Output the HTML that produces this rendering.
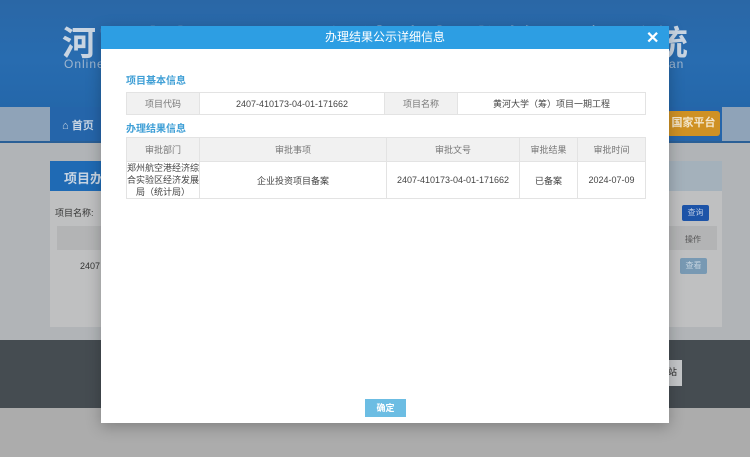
<!DOCTYPE html>
<html><head><meta charset="utf-8"><style>
*{margin:0;padding:0;box-sizing:border-box}
body{width:750px;height:457px;overflow:hidden;position:relative;font-family:"Liberation Sans","Noto Sans CJK SC",sans-serif;background:#a9abad}
.abs{position:absolute}
.hdr{left:0;top:0;width:750px;height:107px;background:linear-gradient(180deg,#2a67a6 0%,#286cb0 55%,#2467aa 100%)}
.title{left:62px;top:16px;font-size:34px;font-weight:bold;color:#c9d5e2;letter-spacing:3px;white-space:nowrap}
.sub{left:64px;top:57px;font-size:12px;color:#9fb6cf;letter-spacing:1px}
.nav{left:0;top:107px;width:750px;height:34px;background:#8fa3b8}
.navin{left:50px;top:107px;width:672px;height:34px;background:#2565aa}
.navbot{left:0;top:141px;width:750px;height:2px;background:#2a5f96}
.content{left:0;top:143px;width:750px;height:197px;background:#b1b4b7}
.panel{left:50px;top:161px;width:672px;height:166px;background:#bfc0c1}
.ph{left:50px;top:161px;width:672px;height:30px;background:#a4b1bb}
.phl{left:50px;top:161px;width:80px;height:30px;background:#1f6ab4;color:#c7d4e2;font-size:13px;font-weight:bold;padding:7px 14px;white-space:nowrap;overflow:hidden}
.dark{left:0;top:340px;width:750px;height:68px;background:#454c51}
.bot{left:0;top:408px;width:750px;height:49px;background:#acacac}
.modal{left:101px;top:26px;width:568px;height:397px;background:#fff;box-shadow:0 4px 14px rgba(0,0,0,.25)}
.mh{left:101px;top:26px;width:568px;height:23px;background:#2d9ee3;color:#fff;font-size:12px;text-align:center;line-height:23px}
.x{left:646px;top:28px;color:#fff;font-size:16px;font-weight:bold}
.sec{font-size:10px;color:#3f9fd6;font-weight:bold}
table{position:absolute;border-collapse:collapse;font-size:9px;color:#444;table-layout:fixed}
td{border:1px solid #e3e3e3;text-align:center;vertical-align:middle}
.g{background:#f1f1f1;color:#777}
.btn{left:365px;top:399px;width:41px;height:18px;background:#6cbde3;color:#fff;font-size:9px;font-weight:bold;text-align:center;line-height:18px}
</style></head><body>
<div class="abs hdr"></div>
<div class="abs title">河南省投资项目在线审批监管平台系统</div>
<div class="abs sub">Online</div>
<div class="abs sub" style="left:669px">an</div>
<div class="abs nav"></div><div class="abs navin"></div><div class="abs navbot"></div>
<div class="abs" style="left:62px;top:117px;color:#c9d6e3;font-size:11px;font-weight:bold">⌂ 首页</div>
<div class="abs" style="left:667px;top:111px;width:53px;height:25px;background:#cf9124;border-radius:3px;color:#f3e6cc;font-size:11px;font-weight:bold;line-height:25px;text-align:center">国家平台</div>
<div class="abs content"></div>
<div class="abs panel"></div>
<div class="abs ph"></div>
<div class="abs phl">项目办理</div>
<div class="abs" style="left:55px;top:206px;font-size:9px;color:#333">项目名称:</div>
<div class="abs" style="left:57px;top:226px;width:660px;height:24px;background:#b3b4b5"></div>
<div class="abs" style="left:80px;top:261px;font-size:9px;color:#333">2407</div>
<div class="abs" style="left:682px;top:205px;width:27px;height:16px;background:#1d54a8;border-radius:2px;color:#b9c9e2;font-size:8px;text-align:center;line-height:16px">查询</div>
<div class="abs" style="left:685px;top:234px;font-size:8px;color:#555">操作</div>
<div class="abs" style="left:680px;top:258px;width:27px;height:16px;background:#7899b3;border-radius:2px;color:#c5d3df;font-size:8px;text-align:center;line-height:16px">查看</div>
<div class="abs dark"></div>
<div class="abs" style="left:665px;top:360px;width:17px;height:26px;background:#c4c6c8;font-size:9px;color:#222;padding:5px 0 0 3px">站</div>
<div class="abs bot"></div>

<div class="abs modal"></div>
<div class="abs mh">办理结果公示详细信息</div>
<div class="abs x">✕</div>
<div class="abs sec" style="left:126px;top:72px">项目基本信息</div>
<table style="left:126px;top:92px;width:519px;height:23px">
<colgroup><col style="width:73px"><col style="width:185px"><col style="width:73px"><col style="width:188px"></colgroup>
<tr><td class="g">项目代码</td><td>2407-410173-04-01-171662</td><td class="g">项目名称</td><td>黄河大学（筹）项目一期工程</td></tr>
</table>
<div class="abs sec" style="left:126px;top:120px">办理结果信息</div>
<table style="left:126px;top:137px;width:519px">
<colgroup><col style="width:73px"><col style="width:187px"><col style="width:133px"><col style="width:58px"><col style="width:68px"></colgroup>
<tr style="height:24px"><td class="g">审批部门</td><td class="g">审批事项</td><td class="g">审批文号</td><td class="g">审批结果</td><td class="g">审批时间</td></tr>
<tr style="height:37px"><td style="line-height:12px">郑州航空港经济综合实验区经济发展局（统计局）</td><td>企业投资项目备案</td><td>2407-410173-04-01-171662</td><td>已备案</td><td>2024-07-09</td></tr>
</table>
<div class="abs btn">确定</div>
</body></html>
